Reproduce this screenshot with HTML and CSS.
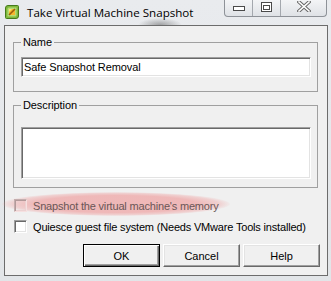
FILE: index.html
```html
<!DOCTYPE html>
<html>
<head>
<meta charset="utf-8">
<link rel="stylesheet" href="styles.css">
</head>
<body>
<div class="window">
  <div class="titlebar">
    <svg class="app-icon" width="16" height="16" viewBox="0 0 16 16">
      <path d="M4 1.5 H13.5 Q14.5 1.5 14.5 2.5 V12 Q14.5 14.5 12 14.5 H2.5 Q1.5 14.5 1.5 13.5 V4 Q1.5 1.5 4 1.5 Z" fill="#7fb83a" stroke="#467a1c"/>
      <path d="M5 3.5 H12.5 V11 Q12.5 12.5 11 12.5 H3.5 V5 Q3.5 3.5 5 3.5 Z" fill="#b6dc74"/>
      <rect x="5" y="5" width="6" height="6" fill="#f6b62c"/>
      <path d="M5 11 L11 5" stroke="#9a5d0c" stroke-width="1.6"/>
      <path d="M5 5 H8 L5 8 Z" fill="#ffe07a"/>
    </svg>
    <span class="title">Take Virtual Machine Snapshot</span>
    <div class="caption-buttons">
      <span class="cb cb-min">
        <svg width="14" height="6" viewBox="0 0 14 6"><rect x="1.5" y="0.5" width="11" height="4" fill="#fff" stroke="#4a4a4a"/></svg>
      </span>
      <span class="cb cb-max">
        <svg width="11" height="10" viewBox="0 0 11 10"><rect x="0.5" y="0.5" width="10" height="9" fill="#fff" stroke="#4a4a4a"/><rect x="2.5" y="3.5" width="6" height="4" fill="#fff" stroke="#4a4a4a"/></svg>
      </span>
      <span class="cb cb-close">
        <svg width="14" height="11" viewBox="0 0 14 11"><path d="M2 1 L12 10 M12 1 L2 10" stroke="#6a6a6a" stroke-width="3.6" stroke-linecap="square"/><path d="M2 1 L12 10 M12 1 L2 10" stroke="#fff" stroke-width="1.6" stroke-linecap="square"/></svg>
      </span>
    </div>
  </div>
  <div class="client">
    <fieldset class="group group-name">
      <legend>Name</legend>
      <input class="field" type="text" value="Safe Snapshot Removal">
    </fieldset>
    <fieldset class="group group-desc">
      <legend>Description</legend>
      <textarea class="field area"></textarea>
    </fieldset>
    <div class="checks">
      <span class="highlight"></span>
      <div class="check disabled"><span class="box"></span><span class="label">Snapshot the virtual machine's memory</span></div>
      <div class="check"><span class="box"></span><span class="label">Quiesce guest file system (Needs VMware Tools installed)</span></div>
    </div>
    <div class="buttons">
      <button class="btn default">OK</button>
      <button class="btn">Cancel</button>
      <button class="btn">Help</button>
    </div>
  </div>
</div>
</body>
</html>
```

FILE: styles.css
```css
html, body {
  margin: 0;
  padding: 0;
}
body {
  background: #e6e8eb;
  font-family: "Liberation Sans", Arial, sans-serif;
  font-size: 11px;
  color: #000;
}
.window {
  width: 331px;
  height: 281px;
  display: flex;
  flex-direction: column;
  background:
    radial-gradient(ellipse 22px 7px at 160px 25px, rgba(70,70,70,0.45), rgba(70,70,70,0)),
    linear-gradient(#e9ebee, #e2e5e8);
  overflow: hidden;
}
.titlebar {
  height: 25px;
  flex: none;
  display: flex;
  align-items: center;
  padding-left: 4px;
}
.app-icon {
  flex: none;
  margin-top: -1px;
}
.title {
  margin-left: 7px;
  font-family: "Open Sans", "Noto Sans", sans-serif;
  font-size: 11.6px;
  color: #000;
  margin-top: -1px;
}
.caption-buttons {
  margin-left: auto;
  margin-right: 4px;
  align-self: flex-start;
  display: flex;
  height: 17px;
  box-sizing: border-box;
  border: 1px solid #8e9298;
  border-top: none;
  border-radius: 0 0 4px 4px;
  background: linear-gradient(#f3f4f6, #dfe2e6);
  overflow: hidden;
}
.cb {
  display: flex;
  align-items: center;
  justify-content: center;
  height: 100%;
  box-sizing: border-box;
}
.cb-min {
  width: 28px;
  border-right: 1px solid #a4a8ae;
  padding-top: 2px;
}
.cb-max {
  width: 28px;
  border-right: 1px solid #a4a8ae;
  padding-bottom: 3px;
}
.cb-close {
  width: 45px;
  padding-bottom: 3px;
}
.client {
  flex: 1;
  margin: 0 3px 5px 4px;
  border: 1px solid #6c6c6c;
  background: #f0f0f0;
  display: flex;
  flex-direction: column;
  padding-top: 10px;
}
.group {
  margin: 0 9px 0 8px;
  border: 1px solid #a0a0a0;
  min-inline-size: 0;
}
.group legend {
  padding: 0 2px;
  line-height: 13px;
  height: 13px;
  font-size: 11px;
  letter-spacing: -0.1px;
}
.group-name {
  padding: 8px 6px 14px 7px;
}
.group-desc {
  margin-top: 7px;
  padding: 15px 6px 8px 7px;
}
.field {
  display: block;
  box-sizing: border-box;
  width: 100%;
  height: 20px;
  margin: 0;
  padding: 0 2px;
  font-family: "Liberation Sans", Arial, sans-serif;
  font-size: 11px;
  letter-spacing: -0.1px;
  color: #000;
  background: #fff;
  border: 1px solid;
  border-color: #a0a0a0 #ffffff #ffffff #a0a0a0;
  box-shadow: inset 1px 1px 0 #696969, inset -1px -1px 0 #e3e3e3;
  outline: none;
}
.area {
  height: 52px;
  resize: none;
}
.checks {
  position: relative;
  margin-top: 7px;
  padding-left: 9px;
}
.highlight {
  position: absolute;
  left: -3px;
  top: -3px;
  width: 228px;
  height: 24px;
  border-radius: 50%;
  background: radial-gradient(ellipse at center, rgba(238,150,150,0.62) 50%, rgba(238,150,150,0.35) 64%, rgba(238,150,150,0) 72%);
}
.check {
  position: relative;
  height: 21px;
  display: flex;
  align-items: center;
}
.box {
  width: 13px;
  height: 13px;
  box-sizing: border-box;
  background: #fff;
  border: 1px solid;
  border-color: #a0a0a0 #ffffff #ffffff #a0a0a0;
  box-shadow: inset 1px 1px 0 #696969, inset -1px -1px 0 #e3e3e3;
  flex: none;
}
.label {
  margin-left: 6px;
  white-space: nowrap;
  letter-spacing: -0.18px;
}
.disabled .box {
  background: transparent;
  border-color: #c4aeae #f6e0e0 #f6e0e0 #c4aeae;
  box-shadow: inset 1px 1px 0 #b39a9a, inset -1px -1px 0 #ecd2d2;
}
.disabled .label {
  color: #6a5656;
}
.buttons {
  margin-top: 7px;
  display: flex;
  justify-content: flex-end;
  gap: 3px;
  padding-right: 7px;
}
.btn {
  width: 77px;
  height: 23px;
  box-sizing: border-box;
  margin: 0;
  padding: 0;
  font-family: "Liberation Sans", Arial, sans-serif;
  font-size: 11px;
  color: #000;
  background: #f0f0f0;
  border: 1px solid;
  border-color: #ffffff #696969 #696969 #ffffff;
  box-shadow: inset -1px -1px 0 #a0a0a0, inset 1px 1px 0 #e3e3e3;
}
.btn.default {
  border: 1px solid #000;
  box-shadow: inset 1px 1px 0 #fff, inset -1px -1px 0 #696969, inset -2px -2px 0 #a0a0a0;
}
```
